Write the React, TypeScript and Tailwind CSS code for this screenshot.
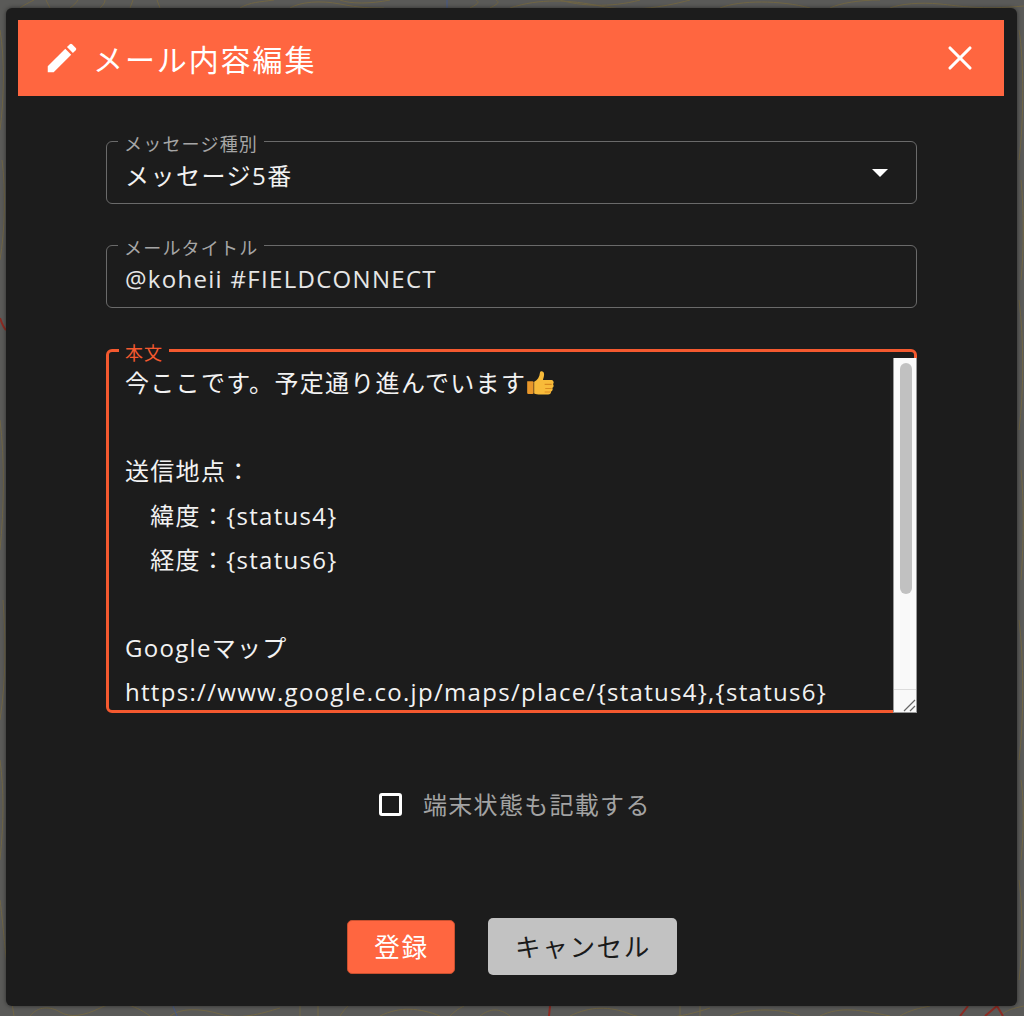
import { X } from "lucide-react";

const font = "font-['Open_Sans','Noto_Sans_CJK_JP',sans-serif]";

const lines = [
  "今ここです。予定通り進んでいます",
  "",
  "送信地点：",
  "　緯度：{status4}",
  "　経度：{status6}",
  "",
  "Googleマップ",
  "https://www.google.co.jp/maps/place/{status4},{status6}",
];

function ThumbsUp() {
  return (
    <svg viewBox="1 3 24 22" className="inline-block h-[27px] w-[28px] align-[-5px]">
      <path
        d="M2 12h4.500a1 1 0 0 1 1 1v9a1 1 0 0 1-1 1H3a1 1 0 0 1-1-1z"
        fill="#e9972a"
      />
      <path
        d="M8 12.500c3-1.500 4.500-4 5-8 .2-1.500 3.500-1.500 3.500 1.500 0 2-.7 3.500-1 5H23a2 2 0 0 1 1 3.500 2 2 0 0 1-.5 3.300 2 2 0 0 1-1 3c.2 1.500-.8 2.700-2.500 2.700h-7c-2 0-3.500-.5-5-1z"
        fill="#f8bb3a"
      />
      <path
        d="M17 14.800h6M17.500 18.300h5.500M17 21.300h5"
        stroke="#d98a20"
        strokeWidth="1"
        fill="none"
      />
    </svg>
  );
}

function Field({ label, children }: { label: string; children: React.ReactNode }) {
  return (
    <div className="relative h-[63px] w-[811px] rounded-[6px] border border-[#6a6a6a] pl-[18px]">
      <span className="absolute -top-[7px] left-[11px] bg-[#1c1c1c] px-[6px] text-[18px] leading-[19px] tracking-[1.200px] text-[#a6a6a6]">
        {label}
      </span>
      {children}
    </div>
  );
}

export default function App() {
  return (
    <div
      className={`relative h-[1016px] w-[1024px] overflow-hidden bg-[#5a5a58] pl-[6px] pt-[8px] ${font}`}
    >
      {/* 背景の地図（等高線） */}
      <svg
        viewBox="0 0 1024 1016"
        className="absolute inset-0 h-full w-full"
        fill="none"
        stroke="#716644"
        strokeWidth="1"
      >
        <path d="M0 30c5 30 4 70 0 100M2 160c4 30 3 70-2 100M0 420c5 40 4 90 0 130M3 600c3 40 3 80-3 120M0 760c4 30 4 60 0 100M0 900c4 30 5 60 14 116" />
        <path d="M1019 30c5 30 5 90 0 130M1021 180c3 30 3 70 0 100M1019 300c5 40 5 90 0 130M1021 470c3 30 3 70 0 110M1019 620c5 40 5 100 0 140M1021 780c3 20 3 50 0 80M1019 880c4 30 4 70 0 100" />
        <path d="M30 1016c8-10 20-10 30-4s24 4 40-4 34-4 50 8M170 1016c10-8 30-8 50-2s40 0 60-6M300 1016v-10M318 1016v-10M340 1016c4-6 6-8 8-10M380 1016c20-10 40-8 60 0M450 1016c6-6 10-8 14-10M480 1016c10-8 20-8 30 0M570 1016c20-10 40-10 60-2s50 4 80-6M680 1016v-10M700 1016v-10M730 1016c20-8 50-8 70 0M820 1016c20-10 40-6 70 0M900 1016c10-6 20-8 30-10M1000 1016c6-6 14-8 24-10" />
        <path d="M20 8c4-3 8-5 14-8M50 8l-4-8M70 8c4-3 6-5 8-8M100 8c3-3 5-5 5-8M130 8l3-8M160 8l-3-8M240 8c10-6 20-6 34-8M290 8c10-6 30-8 50-4s30 4 44 4M340 0c10 4 30 4 50 0M470 8c8-4 10-6 6-8M490 8c8-4 10-6 6-8M510 8c30-10 60-8 90-2s60 2 90-6M560 0c20 6 50 8 80 0M720 8c20-8 60-8 90 0M830 8c10-5 30-8 50-8M890 8c10-4 30-6 50-4s40 6 84 2" />
        <path d="M173 1006l4 10" stroke="#44598a" />
        <path d="M447 0v8" stroke="#44598a" />
        <path d="M0 318c2 6 4 10 6 12M549 1016l1-10M960 1016l8-10M985 1016l12-10 6 10" stroke="#8c2a22" strokeWidth="2" />
      </svg>

      <div className="relative flex h-[998px] w-[1011px] flex-col rounded-[6px] bg-[#1c1c1c] px-[12px] pt-[12px] shadow-[0_0_4px_rgba(0,0,0,0.5)]">
        {/* ヘッダー */}
        <div className="flex h-[76px] w-[986px] items-center bg-[#ff6640] pl-[29px] pr-[24px] text-white">
          <svg viewBox="0 0 24 24" className="-ml-[4px] h-[38px] w-[38px]" fill="currentColor">
            <path d="M3 17.250V21h3.750L17.810 9.940l-3.750-3.750L3 17.250zM20.710 7.040a1 1 0 0 0 0-1.410l-2.340-2.340a1 1 0 0 0-1.410 0l-1.830 1.830 3.750 3.750 1.830-1.830z" />
          </svg>
          <span className="ml-[12px] pt-[3px] text-[30px] leading-none tracking-[1.900px]">メール内容編集</span>
          <X className="ml-auto h-[40px] w-[40px]" strokeWidth={1.900} />
        </div>

        {/* フォーム */}
        <div className="ml-[88px] mt-[45px] flex flex-col">
          <Field label="メッセージ種別">
            <div className="flex h-full items-center pr-[28px] pt-[7px] text-[24px] tracking-[1.500px] text-[#f2f2f2]">
              <span>メッセージ5番</span>
              <span className="mb-[6px] ml-auto h-0 w-0 border-x-[8px] border-t-[8px] border-x-transparent border-t-white" />
            </div>
          </Field>

          <div className="mt-[41px]">
            <Field label="メールタイトル">
              <div className="flex h-full items-center pt-[5px] text-[24px] tracking-[1.300px] text-[#e6e6e6]">
                @koheii #FIELDCONNECT
              </div>
            </Field>
          </div>

          <div className="relative mt-[41px] h-[364px] w-[811px] rounded-[6px] border-[3px] border-[#f4592f] pl-[16px]">
            <span className="absolute -top-[8px] left-[10px] bg-[#1c1c1c] px-[6px] text-[18px] leading-[19px] tracking-[0.900px] text-[#f4592f]">
              本文
            </span>
            <div className="overflow-hidden pt-[9px] text-[24px] leading-[44.200px] tracking-[1.300px] text-[#f2f2f2]">
              {lines.map((line, i) => (
                <div key={i} className="h-[44.200px] whitespace-pre">
                  {line}
                  {i === 0 && <ThumbsUp />}
                </div>
              ))}
            </div>
            {/* スクロールバー */}
            <div className="absolute -right-[3px] bottom-[-3px] top-[6px] flex w-[24px] flex-col border-x border-b border-[#9a9a9a] bg-[#f9f9f9]">
              <div className="flex-1 pl-[6px] pt-[5px]">
                <div className="h-[231px] w-[12px] rounded-full bg-[#c1c1c1]" />
              </div>
              <div className="relative h-[23px] border-t border-[#dcdcdc]">
                <svg viewBox="0 0 22 22" className="absolute inset-0 h-full w-full" stroke="#666" strokeWidth="1.200">
                  <path d="M10 21L21 10M16 21l5-5" />
                </svg>
              </div>
            </div>
          </div>
        </div>

        {/* チェックボックス */}
        <div className="ml-[361px] mt-[78px] flex items-center">
          <span className="h-[23px] w-[23px] rounded-[3px] border-[3px] border-white" />
          <span className="ml-[21px] pt-[1px] text-[24px] leading-[26px] tracking-[1.300px] text-[#a3a3a3]">端末状態も記載する</span>
        </div>

        {/* ボタン */}
        <div className="ml-[329px] mt-[100px] flex items-center">
          <button className="h-[54px] w-[108px] rounded-[5px] border border-[#c9502f] bg-[#ff6640] pl-[1px] pt-[3px] text-[25.600px] tracking-[1.600px] text-white">
            登録
          </button>
          <button className="ml-[33px] h-[57px] w-[189px] rounded-[5px] bg-[#c2c2c2] pl-[1px] pt-[3px] text-[25.600px] tracking-[1.600px] text-[#1a1a1a]">
            キャンセル
          </button>
        </div>
      </div>
    </div>
  );
}
